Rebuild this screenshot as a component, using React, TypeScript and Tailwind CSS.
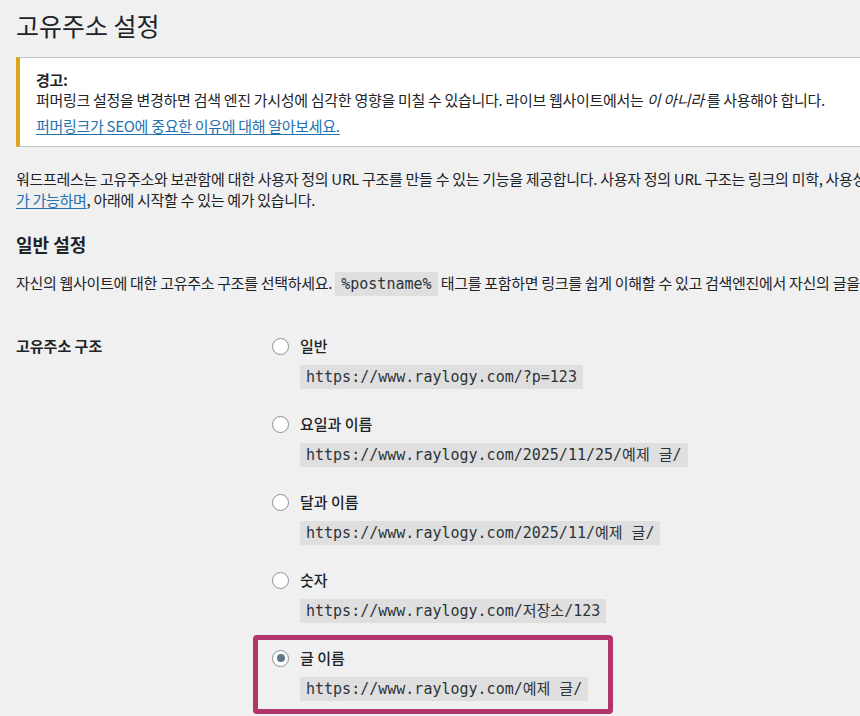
const options = [
  { label: '일반', url: 'https://www.raylogy.com/?p=123' },
  { label: '요일과 이름', url: 'https://www.raylogy.com/2025/11/25/예제 글/' },
  { label: '달과 이름', url: 'https://www.raylogy.com/2025/11/예제 글/' },
  { label: '숫자', url: 'https://www.raylogy.com/저장소/123' },
  { label: '글 이름', url: 'https://www.raylogy.com/예제 글/', checked: true },
];

function Radio({ checked = false }: { checked?: boolean }) {
  return (
    <span className="flex h-[17px] w-[17px] shrink-0 items-center justify-center rounded-full border border-[#8c8f94] bg-white">
      {checked && <span className="h-[8px] w-[8px] rounded-full bg-[#5f7684]" />}
    </span>
  );
}

function Code({ children }: { children: React.ReactNode }) {
  return (
    <code className="block bg-[#dfdfe0] px-[6px] font-['DejaVu_Sans_Mono','Noto_Sans_CJK_KR',monospace] text-[15px] leading-[24px] text-[#2c3338]">
      {children}
    </code>
  );
}

export default function App() {
  return (
    <div className="h-[716px] w-[860px] overflow-hidden bg-[#f0f0f1] font-['Noto_Sans_CJK_KR',sans-serif] text-[#1d2327]">
      <div className="w-[1300px] pl-[16px] pt-[8px]">
        <h1 className="text-[25px] font-normal leading-[34px]">고유주소 설정</h1>

        {/* warning notice */}
        <div className="mt-[15px] border-y border-l-4 border-y-[#c3c4c7] border-l-[#dba617] bg-white pb-[10px] pl-[16px] pt-[12px] text-[15px] tracking-[-0.3px]">
          <p className="whitespace-nowrap leading-[20px]">
            <strong className="font-bold">경고:</strong>
            <br />
            퍼머링크 설정을 변경하면 검색 엔진 가시성에 심각한 영향을 미칠 수 있습니다. 라이브 웹사이트에서는 <em className="italic">이 아니라</em> 를 사용해야 합니다.
          </p>
          <p className="mt-[6px] leading-[20px]">
            <a className="text-[#2271b1] underline underline-offset-2">퍼머링크가 SEO에 중요한 이유에 대해 알아보세요.</a>
          </p>
        </div>

        <p className="mt-[21px] whitespace-nowrap text-[15px] leading-[21px] tracking-[-0.3px]">
          워드프레스는 고유주소와 보관함에 대한 사용자 정의 URL 구조를 만들 수 있는 기능을 제공합니다. 사용자 정의 URL 구조는 링크의 미학, 사용성 및 향후 호환성을 향상시킬 수 있습니다. <a className="text-[#2271b1] underline underline-offset-2">여러 태그</a>
          <br />
          <a className="text-[#2271b1] underline underline-offset-2">가 가능하며</a>, 아래에 시작할 수 있는 예가 있습니다.
        </p>

        <h2 className="mt-[22px] text-[18px] font-bold leading-[24px]">일반 설정</h2>

        <p className="mt-[16px] whitespace-nowrap text-[15px] leading-[21px] tracking-[-0.3px]">
          자신의 웹사이트에 대한 고유주소 구조를 선택하세요.{' '}
          <code className="bg-[#dfdfe0] px-[6px] py-[3px] font-['DejaVu_Sans_Mono',monospace] text-[15px] tracking-normal text-[#2c3338]">%postname%</code>{' '}
          태그를 포함하면 링크를 쉽게 이해할 수 있고 검색엔진에서 자신의 글을 더 잘 찾을 수 있습니다.
        </p>

        <div className="mt-[40px] flex">
          <div className="w-[256px] shrink-0 text-[15px] font-semibold leading-[22px]">고유주소 구조</div>
          <div className="flex flex-col gap-[24px]">
            {options.map((o) => (
              <div key={o.label} className="relative">
                <label className="flex h-[22px] items-center text-[15px] font-medium">
                  <Radio checked={o.checked} />
                  <span className="ml-[11px]">{o.label}</span>
                </label>
                <div className="mt-[8px] flex pl-[28px]">
                  <Code>{o.url}</Code>
                </div>
                {o.checked && (
                  <div className="pointer-events-none absolute -left-[19px] -top-[12px] h-[79px] w-[360px] rounded-[4px] border-[5px] border-[#b0336c]" />
                )}
              </div>
            ))}
          </div>
        </div>
      </div>
    </div>
  );
}
